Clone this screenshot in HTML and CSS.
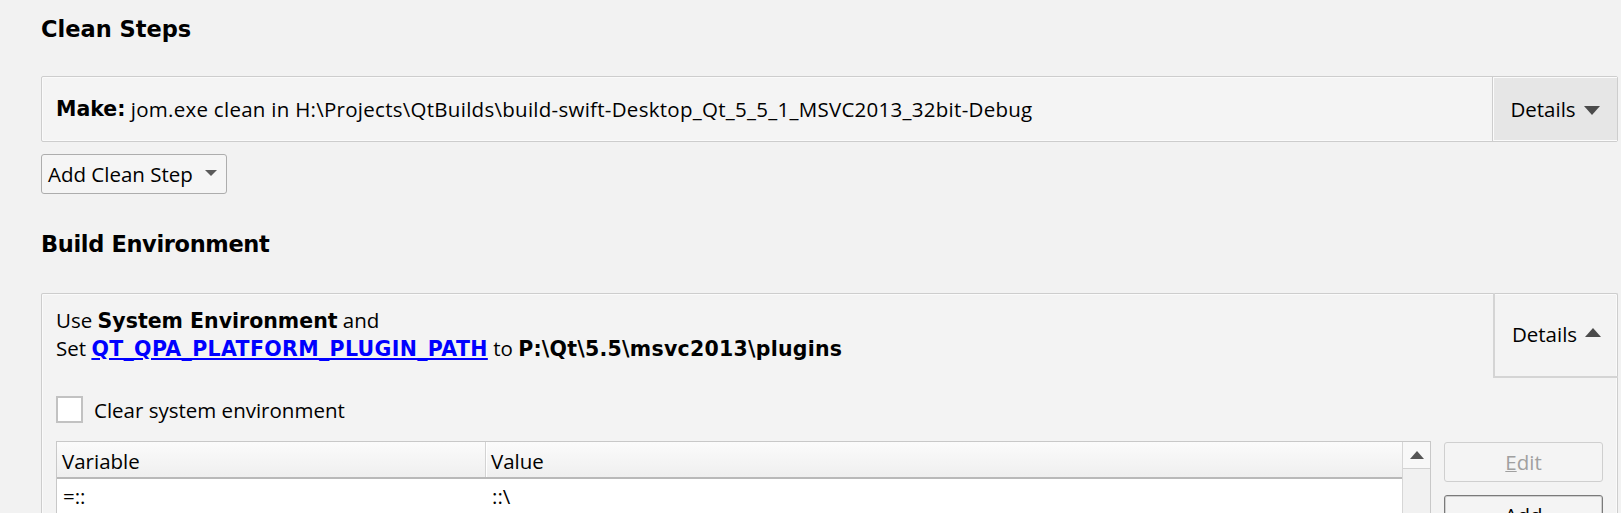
FILE: index.html
```html
<!DOCTYPE html>
<html>
<head>
<meta charset="utf-8">
<title>Build Settings</title>
<link rel="stylesheet" href="styles.css">
</head>
<body>
<div class="page">
  <h2 class="section-title">Clean Steps</h2>
  <div class="details-panel collapsed">
    <div class="summary single"><b>Make:</b>&nbsp;<span class="cmd">jom.exe clean in H:\Projects\QtBuilds\build-swift-Desktop_Qt_5_5_1_MSVC2013_32bit-Debug</span></div>
    <div class="details-toggle closed">Details <span class="tri tri-down"></span></div>
  </div>
  <div class="add-step">Add Clean Step <span class="tri-small"></span></div>

  <h2 class="section-title env-title">Build Environment</h2>
  <div class="details-panel expanded">
    <div class="panel-head">
      <div class="summary multi">Use <b>System Environment</b> and<br>Set <a class="link" href="#">QT_QPA_PLATFORM_PLUGIN_PATH</a> to <b class="path">P:\Qt\5.5\msvc2013\plugins</b></div>
      <div class="details-toggle open">Details <span class="tri tri-up"></span></div>
    </div>
    <div class="panel-body">
      <div class="check-row"><span class="checkbox"></span><span class="check-label">Clear system environment</span></div>
      <div class="env-body">
        <div class="table">
          <div class="table-main">
            <div class="thead">
              <div class="th col-var">Variable</div>
              <div class="th col-val">Value</div>
            </div>
            <div class="trow">
              <div class="td col-var">=::</div>
              <div class="td col-val">::\</div>
            </div>
            <div class="trow">
              <div class="td col-var">ALLUSERSPROFILE</div>
              <div class="td col-val">C:\ProgramData</div>
            </div>
          </div>
          <div class="scrollbar">
            <div class="sb-up"><span class="tri-sb"></span></div>
            <div class="sb-track"></div>
          </div>
        </div>
        <div class="side-buttons">
          <div class="side-btn disabled"><u>E</u>dit</div>
          <div class="side-btn default">Add</div>
          <div class="side-btn">Reset</div>
        </div>
      </div>
    </div>
  </div>
</div>
</body>
</html>
```

FILE: styles.css
```css
* { box-sizing: border-box; }
html, body { margin: 0; padding: 0; background: #f2f2f2; }
body {
  font-family: "Open Sans", "Noto Sans", sans-serif;
  font-size: 20.5px;
  color: #000;
  height: 513px;
  overflow: hidden;
}
b { font-family: "DejaVu Sans", sans-serif; font-weight: bold; font-size: 20.5px; }

.page { padding: 14px 3px 0 41px; }

.section-title {
  margin: 0;
  font-family: "DejaVu Sans", sans-serif;
  font-weight: bold;
  font-size: 22.5px;
  line-height: 30px;
  height: 30px;
}
.env-title { margin-top: 35px; letter-spacing: -0.35px; }

.details-panel {
  border: 1px solid #cdcdcd;
  border-radius: 2px;
  box-shadow: inset 0 0 0 1px #fafafa;
}
.details-panel.collapsed {
  margin-top: 32px;
  height: 66px;
  background: #f4f4f4;
  display: flex;
}
.details-panel.expanded {
  margin-top: 34px;
  background: #f3f3f3;
  border-bottom: none;
}

.summary { flex: 1; white-space: nowrap; }
.summary.single {
  padding-left: 14px;
  display: flex;
  align-items: center;
  line-height: 28px;
}
.cmd { letter-spacing: 0.27px; }
.summary.multi {
  padding: 13px 0 0 14px;
  line-height: 27px;
}

.link {
  color: #0000ff;
  font-family: "DejaVu Sans", sans-serif;
  font-weight: bold;
  font-size: 20.5px;
  letter-spacing: 0.35px;
  text-decoration: underline;
}
.path { letter-spacing: 0.25px; }

.details-toggle {
  width: 125px;
  flex: none;
  display: flex;
  align-items: center;
  justify-content: center;
  gap: 8px;
  line-height: 28px;
}
.details-toggle.closed {
  background: #e6e6e6;
  border-left: 1px solid #cdcdcd;
  box-shadow: inset 1px 0 0 #fbfbfb, inset 0 1px 0 #fbfbfb, inset 0 -1px 0 #fbfbfb;
}
.details-toggle.open {
  height: 85px;
  border-left: 2px solid #d4d4d4;
  border-bottom: 2px solid #d4d4d4;
  margin-top: -1px;
  margin-right: -1px;
  padding-bottom: 2px;
}

.tri { display: inline-block; width: 0; height: 0; margin-top: 2px; }
.tri-down {
  border-left: 8.5px solid transparent;
  border-right: 8.5px solid transparent;
  border-top: 9px solid #4b4b4b;
}
.tri-up {
  border-left: 8.5px solid transparent;
  border-right: 8.5px solid transparent;
  border-bottom: 9px solid #4b4b4b;
  margin-top: -2px;
}

.add-step {
  margin-top: 12px;
  width: 186px;
  height: 40px;
  border: 1px solid #adadad;
  border-radius: 3px;
  background: #f5f5f5;
  display: flex;
  align-items: center;
  padding-left: 6px;
  line-height: 28px;
}
.tri-small {
  display: inline-block;
  width: 0; height: 0;
  border-left: 6px solid transparent;
  border-right: 6px solid transparent;
  border-top: 6px solid #5a5a5a;
  margin-left: 12px;
  margin-top: -2px;
}

.panel-head { display: flex; height: 84px; }

.panel-body { padding: 0 14px; }

.check-row {
  margin-top: 18px;
  height: 27px;
  display: flex;
  align-items: center;
  line-height: 28px;
}
.checkbox {
  width: 27px;
  height: 27px;
  flex: none;
  background: #fff;
  border: 2px solid #c2c2c2;
}
.check-label { margin-left: 11px; }

.env-body {
  margin-top: 18px;
  display: flex;
  gap: 13px;
  align-items: flex-start;
}

.table {
  width: 1375px;
  flex: none;
  height: 200px;
  border: 1px solid #c8c8c8;
  background: #fff;
  display: flex;
}
.table-main { flex: 1; }
.thead {
  display: flex;
  height: 37px;
  background: linear-gradient(#fbfbfb, #efefef);
  border-bottom: 2px solid #b9b9b9;
}
.th { line-height: 34px; padding: 2px 0 0 5px; }
.th.col-var { width: 429px; border-right: 1px solid #d3d3d3; box-shadow: 1px 0 0 #fff; }
.th.col-val { flex: 1; }
.trow { display: flex; height: 30px; }
.td { line-height: 30px; padding-top: 2px; }
.td.col-var { width: 429px; padding-left: 6px; }
.td.col-val { flex: 1; padding-left: 6px; }

.scrollbar {
  width: 28px;
  flex: none;
  border-left: 1px solid #d6d6d6;
  background: #f1f1f1;
  display: flex;
  flex-direction: column;
}
.sb-up {
  height: 27px;
  background: #f8f8f8;
  border-bottom: 1px solid #d2d2d2;
  display: flex;
  align-items: center;
  justify-content: center;
}
.tri-sb {
  display: inline-block;
  width: 0; height: 0;
  border-left: 7px solid transparent;
  border-right: 7px solid transparent;
  border-bottom: 8px solid #555;
}
.sb-track { flex: 1; }

.side-buttons {
  width: 159px;
  flex: none;
  display: flex;
  flex-direction: column;
  gap: 13px;
  padding-top: 1px;
}
.side-btn {
  height: 40px;
  border: 1px solid #bfbfbf;
  border-radius: 3px;
  background: #f4f4f4;
  display: flex;
  align-items: center;
  justify-content: center;
  line-height: 28px;
}
.side-btn.disabled { color: #a0a0a0; border-color: #cfcfcf; }
.side-btn.disabled u { text-decoration-thickness: 1px; }
.side-btn.default { border-color: #7a7a7a; box-shadow: inset 0 0 0 1px #cfcfcf; }
```
